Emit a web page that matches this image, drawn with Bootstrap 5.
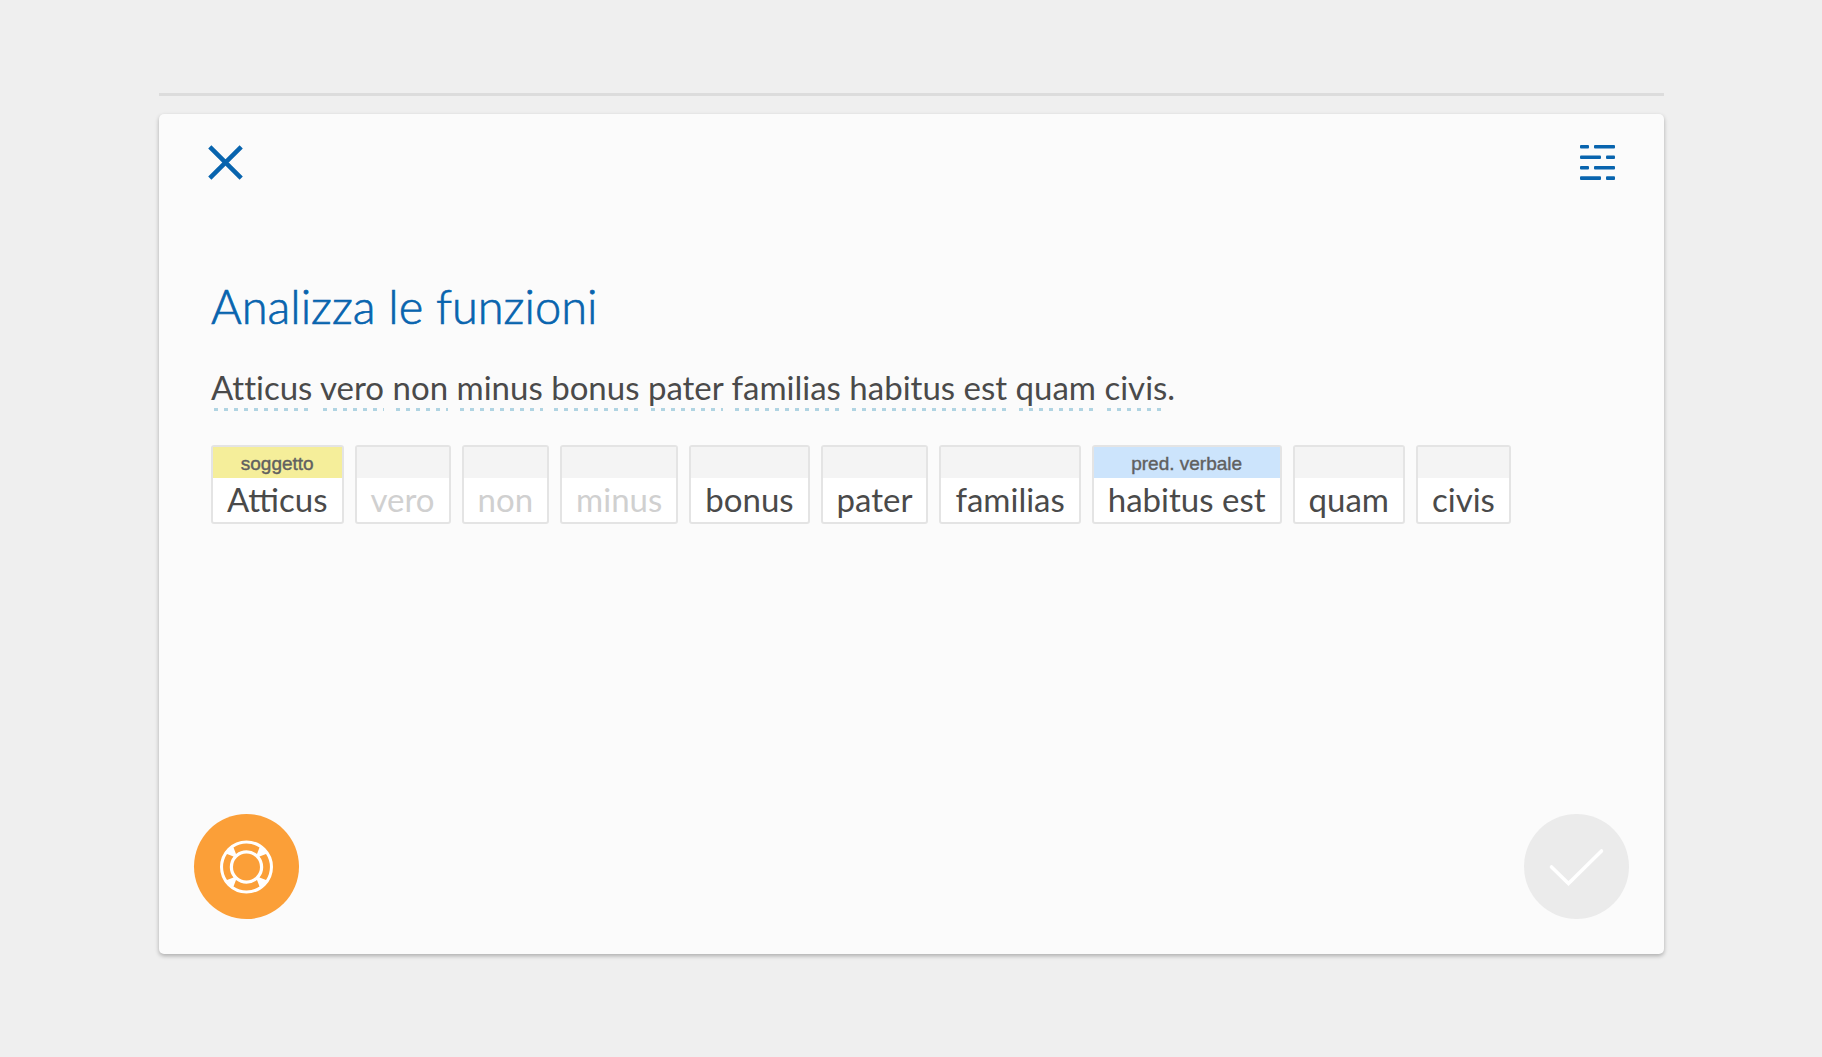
<!DOCTYPE html>
<html lang="it">
<head>
<meta charset="utf-8">
<meta name="viewport" content="width=device-width, initial-scale=1">
<title>Analizza le funzioni</title>
<link href="https://cdn.jsdelivr.net/npm/bootstrap@5.3.0/dist/css/bootstrap.min.css" rel="stylesheet">
<style>
  body { background: #efefef; color: #4a4a4a; font-family: Lato, "Open Sans", sans-serif; font-variant-ligatures: none; }
  .page { padding: 93px 158px 103px 159px; }
  .progress-line { height: 3px; background: #dcdcdc; margin-bottom: 18px; }
  .exercise { background: #fbfbfb; border-radius: 5px; box-shadow: 0 2px 4px rgba(0,0,0,.28); }
  .top-bar { padding: 31px 49px 0; }
  .icon-button { color: #0864ae; line-height: 1; }
  .content { padding: 0 52px; margin-top: 96px; }
  h1 { color: #0864ae; font-size: 47px; font-weight: 300; line-height: 60px; margin: 0 0 27px; -webkit-text-stroke: .7px; }
  .sentence { font-size: 33px; line-height: 48px; margin: 0 0 34px; }
  .sentence span { padding-bottom: 4px; background: repeating-linear-gradient(90deg, transparent 0 3px, #b0d4e2 3px 7px, transparent 7px 10px) 0 100% / 100% 3px no-repeat; }
  .tiles { gap: 11px; }
  .tile { border: 2px solid #e4e4e4; border-radius: 3px; background: #fff; color: #4a4a4a; padding: 0; }
  .tile-label { height: 31px; background: #f4f4f4; color: #606060; font: 500 19px/33px "Liberation Sans", Arial, sans-serif; -webkit-text-stroke: .4px; }
  .tile-word { font-size: 33px; line-height: 42px; padding: 0 14px 2px; }
  .tile.is-muted { color: #d0d0d0; }
  .is-subject .tile-label { background: #f5ee9a; }
  .is-verb .tile-label { background: #cce4fc; }
  .actions { padding: 0 35px 35px; }
  .round { width: 105px; height: 105px; }
  .round-help { background: #fb9f38; }
  .round-confirm { background: #ebebeb; }
</style>
<script src="https://cdn.jsdelivr.net/npm/bootstrap@5.3.0/dist/js/bootstrap.bundle.min.js"></script>
</head>
<body>
<main class="page d-flex flex-column min-vh-100">
  <div class="progress-line"></div>
  <section class="exercise d-flex flex-column flex-grow-1">
    <header class="top-bar d-flex justify-content-between">
      <button type="button" class="icon-button border-0 bg-transparent p-0" aria-label="Chiudi">
        <svg class="d-block" width="35" height="35" viewBox="0 0 35 35" fill="none" stroke="currentColor" stroke-width="4.5"><path d="M1.8 1.8 33.2 33.2M33.2 1.8 1.8 33.2"/></svg>
      </button>
      <button type="button" class="icon-button border-0 bg-transparent p-0" aria-label="Elenco">
        <svg class="d-block" width="35" height="35" viewBox="0 0 35 35" fill="currentColor"><rect width="9" height="3.6" rx="1"/><rect x="14" width="21" height="3.6" rx="1"/><rect y="10.4" width="21" height="3.6" rx="1"/><rect x="26" y="10.4" width="9" height="3.6" rx="1"/><rect y="20.9" width="9" height="3.6" rx="1"/><rect x="14" y="20.9" width="21" height="3.6" rx="1"/><rect y="31.3" width="21" height="3.6" rx="1"/><rect x="26" y="31.3" width="9" height="3.6" rx="1"/></svg>
      </button>
    </header>
    <div class="content flex-grow-1">
      <h1>Analizza le funzioni</h1>
      <p class="sentence"><span>Atticus</span> <span>vero</span> <span>non</span> <span>minus</span> <span>bonus</span> <span>pater</span> <span>familias</span> <span>habitus est</span> <span>quam</span> <span>civis</span>.</p>
      <div class="tiles d-flex flex-wrap">
        <button type="button" class="tile is-subject"><span class="tile-label d-block">soggetto</span><span class="tile-word d-block">Atticus</span></button>
        <button type="button" class="tile is-muted"><span class="tile-label d-block"></span><span class="tile-word d-block">vero</span></button>
        <button type="button" class="tile is-muted"><span class="tile-label d-block"></span><span class="tile-word d-block">non</span></button>
        <button type="button" class="tile is-muted"><span class="tile-label d-block"></span><span class="tile-word d-block">minus</span></button>
        <button type="button" class="tile"><span class="tile-label d-block"></span><span class="tile-word d-block">bonus</span></button>
        <button type="button" class="tile"><span class="tile-label d-block"></span><span class="tile-word d-block">pater</span></button>
        <button type="button" class="tile"><span class="tile-label d-block"></span><span class="tile-word d-block">familias</span></button>
        <button type="button" class="tile is-verb"><span class="tile-label d-block">pred. verbale</span><span class="tile-word d-block">habitus est</span></button>
        <button type="button" class="tile"><span class="tile-label d-block"></span><span class="tile-word d-block">quam</span></button>
        <button type="button" class="tile"><span class="tile-label d-block"></span><span class="tile-word d-block">civis</span></button>
      </div>
    </div>
    <footer class="actions d-flex justify-content-between">
      <button type="button" class="round round-help rounded-circle border-0 p-0" aria-label="Aiuto">
        <svg class="d-block" width="105" height="105" viewBox="-52.5 -53 105 105">
          <circle r="20" fill="none" stroke="#fff" stroke-width="13"/>
          <g fill="#fb9f38">
            <path d="M-13-19.500A23.400 23.400 0 0 1 13-19.500L10.500-13A16.700 16.700 0 0 0-10.500-13Z"/>
            <path d="M-13-19.500A23.400 23.400 0 0 1 13-19.500L10.500-13A16.700 16.700 0 0 0-10.500-13Z" transform="rotate(90)"/>
            <path d="M-13-19.500A23.400 23.400 0 0 1 13-19.500L10.500-13A16.700 16.700 0 0 0-10.500-13Z" transform="rotate(180)"/>
            <path d="M-13-19.500A23.400 23.400 0 0 1 13-19.500L10.500-13A16.700 16.700 0 0 0-10.500-13Z" transform="rotate(270)"/>
          </g>
        </svg>
      </button>
      <button type="button" class="round round-confirm rounded-circle border-0 p-0" aria-label="Conferma">
        <svg class="d-block" width="105" height="105" viewBox="0 0 105 105" fill="none" stroke="#fff" stroke-width="3.6" stroke-linecap="round"><path d="M27.500 53 44.500 69.500 77.500 37"/></svg>
      </button>
    </footer>
  </section>
</main>
</body>
</html>
